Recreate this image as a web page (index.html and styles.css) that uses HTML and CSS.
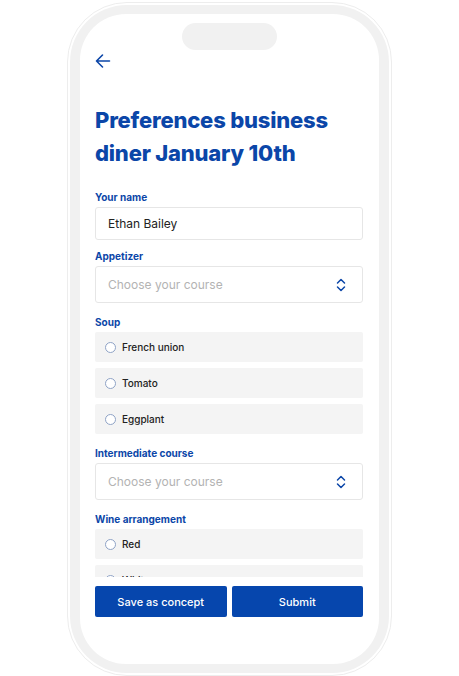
FILE: index.html
```html
<!DOCTYPE html>
<html lang="en">
<head>
    <meta charset="UTF-8">
    <meta name="viewport" content="width=device-width, initial-scale=1.0">
    <title>Preferences business diner</title>
    <link rel="stylesheet" href="styles.css">
</head>
<body>
    <div class="phone">
        <div class="bezel">
            <div class="screen">
                <div class="notch"></div>
                <div class="topbar">
                    <svg class="back" width="16" height="16" viewBox="0 0 16 16" fill="none" stroke="currentColor" stroke-width="1.6" stroke-linecap="round" stroke-linejoin="round">
                        <path d="M14.5 8H1.5M7.5 2L1.5 8l6 6"/>
                    </svg>
                </div>
                <div class="content">
                    <h1>Preferences business diner January 10th</h1>

                    <label class="label" for="name">Your name</label>
                    <input class="field" type="text" id="name" value="Ethan Bailey">

                    <div class="label">Appetizer</div>
                    <div class="field select">
                        <span>Choose your course</span>
                        <svg width="10" height="14" viewBox="0 0 10 14" fill="none" stroke="currentColor" stroke-width="1.5" stroke-linecap="round" stroke-linejoin="round">
                            <path d="M1.5 5L5 1.5 8.5 5M1.5 9L5 12.5 8.5 9"/>
                        </svg>
                    </div>

                    <div class="label">Soup</div>
                    <div class="options">
                        <div class="option"><span class="radio"></span>French union</div>
                        <div class="option"><span class="radio"></span>Tomato</div>
                        <div class="option"><span class="radio"></span>Eggplant</div>
                    </div>

                    <div class="label">Intermediate course</div>
                    <div class="field select">
                        <span>Choose your course</span>
                        <svg width="10" height="14" viewBox="0 0 10 14" fill="none" stroke="currentColor" stroke-width="1.5" stroke-linecap="round" stroke-linejoin="round">
                            <path d="M1.5 5L5 1.5 8.5 5M1.5 9L5 12.5 8.5 9"/>
                        </svg>
                    </div>

                    <div class="label">Wine arrangement</div>
                    <div class="options">
                        <div class="option"><span class="radio"></span>Red</div>
                        <div class="option"><span class="radio"></span>White</div>
                    </div>
                </div>
                <div class="actions">
                    <button>Save as concept</button>
                    <button>Submit</button>
                </div>
            </div>
        </div>
    </div>
</body>
</html>
```

FILE: styles.css
```css
body {
    margin: 0;
    padding: 0;
    background: #fff;
    font-family: "Inter", "Liberation Sans", sans-serif;
}

.phone {
    box-sizing: border-box;
    width: 325px;
    height: 674px;
    margin: 2px auto 0;
    padding: 2px;
    border: 1px solid #ededed;
    border-radius: 60px;
    background: #fff;
}

.bezel {
    box-sizing: border-box;
    height: 100%;
    padding: 9px 10px 9px 10px;
    border-radius: 57px;
    background: #f1f1f1;
}

.screen {
    box-sizing: border-box;
    height: 100%;
    padding: 9px 16px 47px 15px;
    border-radius: 46px;
    background: #fff;
    display: flex;
    flex-direction: column;
    overflow: hidden;
}

.notch {
    width: 95px;
    height: 27px;
    margin: 0 auto;
    border-radius: 14px;
    background: #f1f1f1;
}

.topbar {
    height: 20px;
    margin-top: 1px;
    display: flex;
    align-items: center;
}

.back {
    color: #0b46a8;
}

.content {
    flex: 1;
    overflow: hidden;
    display: flex;
    flex-direction: column;
}

.content > * {
    flex-shrink: 0;
}

h1 {
    margin: 33px 0 21px;
    font-size: 22px;
    line-height: 33px;
    font-weight: 800;
    letter-spacing: -0.2px;
    color: #0b46a8;
}

.label {
    font-size: 10px;
    font-weight: 700;
    line-height: 12px;
    color: #0b46a8;
    margin-bottom: 4px;
}

.field {
    box-sizing: border-box;
    width: 100%;
    height: 33px;
    margin: 0 0 10px;
    padding: 0 12px;
    border: 1px solid #e6e6e6;
    border-radius: 3px;
    background: #fff;
    font-family: inherit;
    font-size: 12px;
    color: #222;
    outline: none;
}

.select {
    height: 37px;
    display: flex;
    align-items: center;
    justify-content: space-between;
    padding-right: 16px;
    color: #b3b3b3;
    margin-bottom: 13px;
}

.select svg {
    color: #0b46a8;
}

.options {
    display: flex;
    flex-direction: column;
    gap: 6px;
    margin-bottom: 13px;
}

.option {
    height: 30px;
    flex-shrink: 0;
    display: flex;
    align-items: center;
    gap: 6px;
    padding-left: 10px;
    border-radius: 2px;
    background: #f4f4f4;
    font-size: 10px;
    font-weight: 500;
    color: #222;
}

.radio {
    box-sizing: border-box;
    width: 11px;
    height: 11px;
    border: 1.3px solid #8fa3c6;
    border-radius: 50%;
    background: #fff;
}

.actions {
    display: flex;
    gap: 5px;
    padding-top: 9px;
}

button {
    flex: 1;
    height: 31px;
    border: none;
    border-radius: 2px;
    background: #0646ad;
    color: #fff;
    font-family: inherit;
    font-size: 11px;
    font-weight: 500;
}
```
